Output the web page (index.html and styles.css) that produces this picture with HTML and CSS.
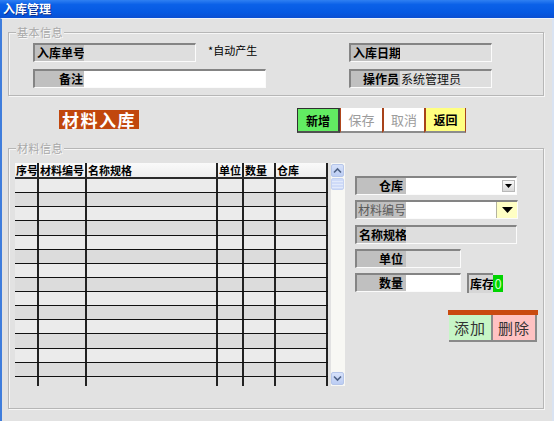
FILE: index.html
```html
<!DOCTYPE html>
<html lang="zh-CN">
<head>
<meta charset="utf-8">
<title>入库管理</title>
<link rel="stylesheet" href="styles.css">
</head>
<body>
<div class="window">
  <div class="titlebar">入库管理</div>
  <div class="client">
    <div class="group group-basic">
      <span class="legend">基本信息</span>
      <div class="frow">
        <div class="fld"><span class="lbl">入库单号</span><span class="val ro w111"></span></div>
        <span class="note">*自动产生</span>
        <div class="fld"><span class="lbl">入库日期</span><span class="val ro w91"></span></div>
      </div>
      <div class="frow">
        <div class="fld"><span class="lbl right">备注</span><span class="val w181"></span></div>
        <div class="fld ml83"><span class="lbl right">操作员</span><span class="val ro w91">系统管理员</span></div>
      </div>
    </div>

    <div class="actions">
      <span class="banner">材料入库</span>
      <div class="toolbar">
        <div class="tb tb-new">新增</div>
        <div class="tb tb-off">保存</div>
        <div class="tb tb-off tb-sep">取消</div>
        <div class="tb tb-back tb-sep">返回</div>
      </div>
    </div>

    <div class="group group-mat">
      <span class="legend">材料信息</span>
      <div class="mat-body">
        <div class="grid">
          <div class="gr gh"><span>序号</span><span>材料编号</span><span>名称规格</span><span>单位</span><span>数量</span><span>仓库</span></div>
          <div class="gr"><span></span><span></span><span></span><span></span><span></span><span></span></div>
          <div class="gr"><span></span><span></span><span></span><span></span><span></span><span></span></div>
          <div class="gr"><span></span><span></span><span></span><span></span><span></span><span></span></div>
          <div class="gr"><span></span><span></span><span></span><span></span><span></span><span></span></div>
          <div class="gr"><span></span><span></span><span></span><span></span><span></span><span></span></div>
          <div class="gr"><span></span><span></span><span></span><span></span><span></span><span></span></div>
          <div class="gr"><span></span><span></span><span></span><span></span><span></span><span></span></div>
          <div class="gr"><span></span><span></span><span></span><span></span><span></span><span></span></div>
          <div class="gr"><span></span><span></span><span></span><span></span><span></span><span></span></div>
          <div class="gr"><span></span><span></span><span></span><span></span><span></span><span></span></div>
          <div class="gr"><span></span><span></span><span></span><span></span><span></span><span></span></div>
          <div class="gr"><span></span><span></span><span></span><span></span><span></span><span></span></div>
          <div class="gr"><span></span><span></span><span></span><span></span><span></span><span></span></div>
          <div class="gr"><span></span><span></span><span></span><span></span><span></span><span></span></div>
          <div class="gr gt"><span></span><span></span><span></span><span></span><span></span><span></span></div>
        </div>
        <div class="vscroll">
          <div class="sb-btn"><svg width="9" height="7" viewBox="0 0 9 7"><path d="M1 5.5 L4.5 2 L8 5.5" fill="none" stroke="#4d6185" stroke-width="1.6"/></svg></div>
          <div class="sb-thumb"></div>
          <div class="sb-track"></div>
          <div class="sb-btn"><svg width="9" height="7" viewBox="0 0 9 7"><path d="M1 1.5 L4.5 5 L8 1.5" fill="none" stroke="#4d6185" stroke-width="1.6"/></svg></div>
        </div>
        <div class="editor">
          <div class="fld">
            <span class="lbl right pr3">仓库</span>
            <span class="val w110 combo"><span class="dd-small"><svg width="7" height="4" viewBox="0 0 7 4"><path d="M0 0 H7 L3.5 4 Z" fill="#000"/></svg></span></span>
          </div>
          <div class="fld">
            <span class="lbl dim">材料编号</span>
            <span class="val w90"></span>
            <span class="dd-yellow"><svg width="11" height="6" viewBox="0 0 11 6"><path d="M0 0 H11 L5.5 6 Z" fill="#000"/></svg></span>
          </div>
          <div class="fld">
            <span class="lbl">名称规格</span><span class="val ro w110"></span>
          </div>
          <div class="fld">
            <span class="lbl right pr3">单位</span><span class="val ro w54"></span>
          </div>
          <div class="erow">
            <div class="fld"><span class="lbl right pr3">数量</span><span class="val w54"></span></div>
            <div class="fld stock"><span class="lbl stock-lbl">库存</span></div>
            <span class="stock-val">0</span>
          </div>
          <div class="addbox">
            <div class="addbar"></div>
            <div class="addbtns">
              <div class="ab ab-add">添加</div>
              <div class="ab ab-del">删除</div>
            </div>
          </div>
        </div>
      </div>
    </div>
  </div>
</div>
</body>
</html>
```

FILE: styles.css
```css
* { box-sizing: border-box; }
html, body { margin: 0; padding: 0; }
body {
  width: 554px;
  height: 421px;
  overflow: hidden;
  font-family: "Noto Sans CJK SC", "Noto Sans", sans-serif;
  font-size: 12px;
  color: #000;
  background: #e2e2e2;
}
.window {
  width: 554px;
  height: 421px;
  display: flex;
  flex-direction: column;
  background: #e2e2e2;
}
.titlebar {
  height: 18px;
  flex: none;
  padding-left: 3px;
  color: #fff;
  font-weight: bold;
  font-size: 12px;
  line-height: 18px;
  background: linear-gradient(to bottom, #2f80f2 0%, #0b61e8 25%, #0559e2 70%, #0a4fd2 100%);
  text-shadow: 1px 1px 0 #0a2f90;
}
.client {
  flex: 1;
  display: flex;
  flex-direction: column;
  border-left: 2px solid #3f7ddc;
  border-right: 2px solid #d9e3f2;
  border-top: 1px solid #eef3fa;
  padding-left: 6px;
}
.group {
  position: relative;
  width: 536px;
  border: 1px solid #b6b6b6;
  box-shadow: inset 1px 1px 0 #f6f6f6, 1px 1px 0 #f6f6f6;
}
.legend {
  position: absolute;
  top: -8px;
  left: 7px;
  padding: 0 1px;
  background: #e2e2e2;
  color: #a8a8a8;
  font-size: 11px;
  line-height: 14px;
  letter-spacing: 0.5px;
  text-shadow: 1px 1px 0 #fafafa;
}
.group-basic {
  margin-top: 13px;
  height: 64px;
  padding: 10px 0 0 24px;
  display: flex;
  flex-direction: column;
  gap: 7px;
}
.frow { display: flex; align-items: center; height: 19px; }
.fld {
  display: flex;
  height: 19px;
  border-top: 2px solid #848484;
  border-left: 2px solid #848484;
  border-bottom: 1px solid #fbfbfb;
  border-right: 1px solid #fbfbfb;
}
.lbl {
  width: 49px;
  background: #c0c0c0;
  font-weight: bold;
  font-size: 12px;
  line-height: 16px;
  padding-left: 2px;
  white-space: nowrap;
}
.lbl.right { text-align: right; padding-left: 0; padding-right: 1px; }
.lbl.pr3 { padding-right: 3px; }
.lbl.dim { font-weight: normal; color: #5a5a5a; padding-left: 1px; }
.val {
  background: #fff;
  font-size: 12px;
  line-height: 16px;
  padding-left: 1px;
  color: #111;
  white-space: nowrap;
}
.val.ro { background: #dedede; }
.w54 { width: 54px; }
.w90 { width: 90px; }
.w91 { width: 91px; }
.w110 { width: 110px; }
.w111 { width: 111px; }
.w181 { width: 181px; }
.ml83 { margin-left: 83px; }
.note {
  width: 141px;
  margin-left: 12px;
  font-size: 11px;
  line-height: 14px;
  margin-top: -5px;
}

.actions {
  display: flex;
  align-items: flex-start;
  height: 25px;
  margin-top: 12px;
}
.banner {
  margin-left: 51px;
  margin-top: 2px;
  height: 19px;
  padding: 0 3px;
  background: #c1470d;
  color: #fff;
  font-size: 17px;
  font-weight: bold;
  line-height: 19px;
  letter-spacing: 1.5px;
}
.toolbar {
  display: flex;
  margin-left: 158px;
  height: 25px;
}
.tb {
  width: 42px;
  height: 25px;
  display: flex;
  align-items: center;
  justify-content: center;
  font-size: 13px;
  background: #fff;
  color: #9c9c9c;
  border-bottom: 2px solid #8c8c8c;
}
.tb-new {
  width: 43px;
  background: #62ec62;
  color: #000;
  font-weight: bold;
  font-size: 12px;
  border: 1px solid #303030;
  border-right: 2px solid #404040;
  border-bottom: 2px solid #505050;
}
.tb-off { border-left: 1px solid #b0461c; }
.tb-sep { border-left: 2px solid #a8431a; }
.tb-back {
  background: #ffff80;
  color: #000;
  font-weight: bold;
  font-size: 12px;
  border-right: 1px solid #a8431a;
}

.group-mat {
  margin-top: 15px;
  height: 261px;
  padding: 14px 0 0 6px;
}
.mat-body { display: flex; align-items: flex-start; }
.grid {
  width: 313px;
  height: 223px;
  display: flex;
  flex-direction: column;
  overflow: hidden;
}
.gr {
  display: grid;
  grid-template-columns: 24px 48px 131px 26px 32px 52px;
  height: 14.14px;
  flex: none;
  background: #ebebeb;
  border-bottom: 1px solid #111;
}
.gr:nth-child(odd) { background: #dcdcdc; }
.gr > span { border-right: 2px solid #222; }
.gr.gh {
  height: 16px;
  background: linear-gradient(#fafafa, #ededed);
  font-weight: bold;
  font-size: 11px;
  line-height: 14px;
  border-bottom: 2px solid #2a2a2a;
}
.gr.gh > span { padding-left: 1px; white-space: nowrap; }
.gr.gt {
  height: 9px;
  background: transparent;
  border-bottom: 0;
}

.vscroll {
  width: 14px;
  height: 223px;
  margin-left: 3px;
  background: #f8f8f4;
  display: flex;
  flex-direction: column;
  padding: 1px 1px 1px 0;
}
.sb-btn {
  height: 13px;
  flex: none;
  background: linear-gradient(#d6e1fa, #bccdf3);
  border: 1px solid #b6c6ea;
  border-radius: 2px;
  display: flex;
  align-items: center;
  justify-content: center;
}
.sb-thumb {
  height: 12px;
  flex: none;
  margin-top: 1px;
  background: repeating-linear-gradient(#cfdbf8 0 2px, #e2eafb 2px 3px);
  border: 1px solid #c4d2f2;
  border-radius: 2px;
}
.sb-track { flex: 1; }

.editor {
  margin-left: 10px;
  margin-top: 13px;
  display: flex;
  flex-direction: column;
  align-items: flex-start;
  gap: 5.25px;
}
.combo {
  display: flex;
  justify-content: flex-end;
  align-items: center;
  padding-right: 1px;
}
.dd-small {
  width: 13px;
  height: 12px;
  background: linear-gradient(#fafafa, #d8d8d8);
  border: 1px solid #b8b8b8;
  display: flex;
  align-items: center;
  justify-content: center;
}
.dd-yellow {
  width: 21px;
  background: #ffffc4;
  border-left: 1px solid #b4b4a0;
  display: flex;
  align-items: center;
  justify-content: center;
}
.erow { display: flex; align-items: flex-start; }
.stock { margin-left: 6px; height: 20px; border-bottom: 0; border-right: 0; }
.stock-lbl { width: 24px; background: #d6d6d6; padding-left: 1px; line-height: 17px; }
.stock-val {
  width: 10px;
  height: 17px;
  margin-top: 2px;
  background: #00d400;
  color: #c8ffc8;
  font-size: 13px;
  line-height: 17px;
  text-align: center;
}
.addbox {
  margin-left: 93px;
  margin-top: 12px;
  width: 90px;
}
.addbar { height: 5px; background: #c94a10; }
.addbtns { display: flex; padding-left: 1px; }
.ab {
  width: 44px;
  height: 27px;
  display: flex;
  align-items: center;
  justify-content: center;
  font-size: 15px;
  color: #333;
  border-right: 2px solid #8a8a8a;
  border-bottom: 2px solid #8a8a8a;
  letter-spacing: 1px;
}
.ab-add { background: #c6f6c6; }
.ab-del { background: #ffc2c2; }
```
